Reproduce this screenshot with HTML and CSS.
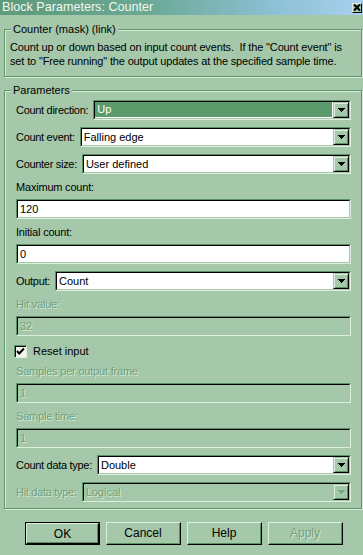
FILE: index.html
```html
<!DOCTYPE html>
<html>
<head>
<meta charset="utf-8">
<link rel="stylesheet" href="styles.css">
</head>
<body>
<div class="titlebar">
  <span class="title">Block Parameters: Counter</span>
  <span class="close"><svg width="8" height="7" viewBox="0 0 8 7"><path d="M1 0.5L7 6.5M7 0.5L1 6.5" stroke="#000" stroke-width="2"/></svg></span>
</div>
<div class="dialog">
  <fieldset class="group desc-group">
    <legend>Counter (mask) (link)</legend>
    <p class="desc">Count up or down based on input count events.&nbsp; If the "Count event" is<br>set to "Free running" the output updates at the specified sample time.</p>
  </fieldset>
  <fieldset class="group params">
    <legend>Parameters</legend>
    <div class="crow"><span class="clabel">Count direction:</span><div class="combo"><div class="combo-in"><span class="value selected">Up</span><span class="drop"><svg width="7" height="4" viewBox="0 0 7 4"><path d="M0 0H7L3.5 4Z"/></svg></span></div></div></div>
    <div class="crow"><span class="clabel">Count event:</span><div class="combo"><div class="combo-in"><span class="value">Falling edge</span><span class="drop"><svg width="7" height="4" viewBox="0 0 7 4"><path d="M0 0H7L3.5 4Z"/></svg></span></div></div></div>
    <div class="crow"><span class="clabel">Counter size:</span><div class="combo"><div class="combo-in"><span class="value">User defined</span><span class="drop"><svg width="7" height="4" viewBox="0 0 7 4"><path d="M0 0H7L3.5 4Z"/></svg></span></div></div></div>
    <div class="lbl">Maximum count:</div>
    <div class="field"><div class="field-in">120</div></div>
    <div class="lbl">Initial count:</div>
    <div class="field"><div class="field-in">0</div></div>
    <div class="crow"><span class="clabel">Output:</span><div class="combo"><div class="combo-in"><span class="value">Count</span><span class="drop"><svg width="7" height="4" viewBox="0 0 7 4"><path d="M0 0H7L3.5 4Z"/></svg></span></div></div></div>
    <div class="lbl disabled">Hit value:</div>
    <div class="field off"><div class="field-in">32</div></div>
    <div class="check"><span class="box"><svg width="11" height="11" viewBox="0 0 11 11"><path d="M2 5L4.2 7.5L9 2.5" fill="none" stroke="#000" stroke-width="2"/></svg></span><span>Reset input</span></div>
    <div class="lbl disabled">Samples per output frame</div>
    <div class="field off"><div class="field-in">1</div></div>
    <div class="lbl disabled">Sample time:</div>
    <div class="field off"><div class="field-in">1</div></div>
    <div class="crow"><span class="clabel">Count data type:</span><div class="combo"><div class="combo-in"><span class="value">Double</span><span class="drop"><svg width="7" height="4" viewBox="0 0 7 4"><path d="M0 0H7L3.5 4Z"/></svg></span></div></div></div>
    <div class="crow off"><span class="clabel disabled">Hit data type:</span><div class="combo"><div class="combo-in"><span class="value disabled">Logical</span><span class="drop"><svg width="7" height="4" viewBox="0 0 7 4"><path d="M0 0H7L3.5 4Z"/></svg></span></div></div></div>
  </fieldset>
  <div class="buttons">
    <div class="btn default"><div class="btn-in">OK</div></div>
    <div class="btn"><div class="btn-in">Cancel</div></div>
    <div class="btn"><div class="btn-in">Help</div></div>
    <div class="btn"><div class="btn-in disabled">Apply</div></div>
  </div>
</div>
</body>
</html>
```
FILE: styles.css
```css
* { box-sizing: border-box; }

body {
  margin: 0;
  width: 363px;
  height: 555px;
  overflow: hidden;
  background: #a4c8a9;
  font-family: "Liberation Sans", Arial, sans-serif;
  font-size: 11px;
  line-height: 14px;
  color: #000;
}

.titlebar {
  height: 15px;
  display: flex;
  align-items: center;
  justify-content: space-between;
  padding: 0 1px 0 2px;
  background: linear-gradient(90deg, #5d9b7c 0%, #6aa893 40%, #8cc0d4 75%, #a8d0ee 100%);
}

.title {
  color: #f2f8f2;
  font-size: 12.6px;
  line-height: 15px;
}

.close {
  width: 10px;
  height: 10px;
  display: flex;
  align-items: center;
  justify-content: center;
  background: #a4c8a9;
  border-top: 1px solid #dcefdc;
  border-left: 1px solid #dcefdc;
  border-right: 1px solid #000;
  border-bottom: 1px solid #000;
}

.dialog {
  padding: 7px 1px 0 4px;
}

.group {
  margin: 0;
  min-width: 0;
  border: 1px solid #5e9868;
  box-shadow: 1px 1px 0 #d4ead6, inset 1px 1px 0 #d4ead6;
}

.group legend {
  padding: 0 2px;
  line-height: 14px;
  background: #a4c8a9;
}

.desc-group {
  padding: 4px 4px 8px 5px;
}

.desc-group legend {
  margin-left: 1px;
}

.desc {
  margin: 0;
  white-space: nowrap;
  letter-spacing: -0.15px;
}

.params {
  margin-top: 6px;
  padding: 3px 10px 6px 11px;
}

.params legend {
  margin-left: -5px;
}

.crow {
  display: flex;
  align-items: center;
  gap: 5px;
  height: 20px;
  margin-top: 7px;
}

.crow:first-of-type { margin-top: 0; }

.clabel {
  white-space: nowrap;
  letter-spacing: -0.3px;
}

.combo, .field {
  height: 20px;
  flex: 1;
  border-top: 1px solid #5a9064;
  border-left: 1px solid #5a9064;
  border-right: 1px solid #dcefdc;
  border-bottom: 1px solid #dcefdc;
}

.combo-in, .field-in {
  height: 100%;
  border-top: 1px solid #000;
  border-left: 1px solid #000;
  border-right: 1px solid #a4c8a9;
  border-bottom: 1px solid #a4c8a9;
  background: #fff;
}

.combo-in {
  display: flex;
}

.value {
  flex: 1;
  padding-left: 2px;
  line-height: 16px;
}

.value.selected {
  background: #5b9a6b;
  color: #fff;
  margin: 0 1px 1px 0;
  line-height: 15px;
}

.drop {
  width: 16px;
  height: 16px;
  display: flex;
  align-items: center;
  justify-content: center;
  background: #a4c8a9;
  border-top: 1px solid #a4c8a9;
  border-left: 1px solid #a4c8a9;
  border-right: 1px solid #000;
  border-bottom: 1px solid #000;
  box-shadow: inset 1px 1px 0 #dcefdc, inset -1px -1px 0 #5a9064;
}

.drop svg { fill: #000; shape-rendering: crispEdges; }

.off .combo-in { background: #a4c8a9; }
.off .drop svg { fill: #76a67f; }

.lbl {
  margin-top: 6px;
  white-space: nowrap;
  letter-spacing: -0.2px;
}

.field {
  margin-top: 7px;
}

.lbl + .field { margin-top: 5px; }

.field-in {
  padding-left: 2px;
  line-height: 16px;
}

.field.off .field-in {
  background: #a4c8a9;
  color: #72a07b;
  text-shadow: 1px 1px 0 #d4ead6;
}

.disabled {
  color: #72a07b;
  text-shadow: 1px 1px 0 #d4ead6;
}

.check {
  display: flex;
  align-items: center;
  gap: 6px;
  height: 14px;
  margin-top: 8px;
  margin-left: -2px;
}

.box {
  width: 13px;
  height: 13px;
  display: flex;
  align-items: center;
  justify-content: center;
  background: #eef6ee;
  border-top: 1px solid #5a9064;
  border-left: 1px solid #5a9064;
  border-right: 1px solid #dcefdc;
  border-bottom: 1px solid #dcefdc;
  box-shadow: inset 1px 1px 0 #000;
}

.buttons {
  display: flex;
  gap: 6px;
  margin-top: 13px;
  padding-left: 21px;
}

.btn {
  width: 75px;
  height: 23px;
  border-top: 1px solid #dcefdc;
  border-left: 1px solid #dcefdc;
  border-right: 1px solid #000;
  border-bottom: 1px solid #000;
}

.btn-in {
  height: 100%;
  display: flex;
  align-items: center;
  justify-content: center;
  border-right: 1px solid #5a9064;
  border-bottom: 1px solid #5a9064;
  font-size: 12px;
}

.btn.default {
  border: 1px solid #000;
}

.btn.default .btn-in {
  border-top: 1px solid #dcefdc;
  border-left: 1px solid #dcefdc;
  border-right: 1px solid #000;
  border-bottom: 1px solid #000;
  box-shadow: inset -1px -1px 0 #5a9064;
}
```
